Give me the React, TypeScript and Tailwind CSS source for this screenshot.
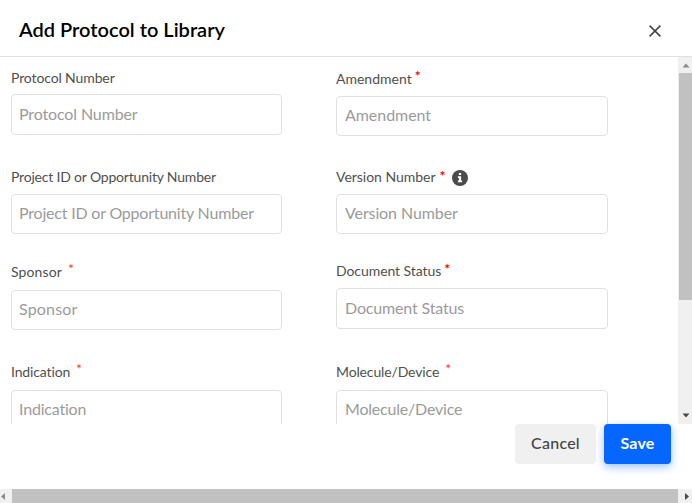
import React from "react";

type FieldProps = {
  name: string;
  className: string;
  labelClass: string;
  inputClass: string;
  star?: string;
  info?: boolean;
};

function InfoIcon() {
  return (
    <svg className="ml-[6px] mt-[3px] size-4 shrink-0" viewBox="0 0 16 16" aria-hidden="true">
      <circle cx="8" cy="8" r="8" fill="#4b4b4b" />
      <path d="M6.9 3h2.2v2.1H6.9zM5.9 6.3h3.2v4.2h1v1.7H5.9v-1.7h1V8h-1z" fill="#fff" />
    </svg>
  );
}

function Field({ name, className, labelClass, inputClass, star, info }: FieldProps) {
  return (
    <div className={`shrink-0 ${className}`}>
      <div className="flex h-5 items-start whitespace-nowrap text-[14px] leading-5 text-[#505050]">
        <span className={labelClass}>{name}</span>
        {star && <span className={`h-5 w-[6px] text-[14px] leading-5 ${star}`}>*</span>}
        {info && <InfoIcon />}
      </div>
      <input
        type="text"
        placeholder={name}
        aria-label={name}
        className={`block w-full rounded-[4px] border border-[#e0e0e0] bg-white pr-2 text-[16px] text-[#505050] outline-none placeholder:text-[#9b9b9b] ${inputClass}`}
      />
    </div>
  );
}

export default function App() {
  return (
    <div className="flex h-[503px] w-[692px] flex-col overflow-hidden bg-white font-[Lato,sans-serif]">
      <header className="flex h-[57px] shrink-0 items-center justify-between border-b border-[#dfdfdf] pl-[19px] pr-[31px] pt-1">
        <h1 className="mb-[2px] whitespace-nowrap text-[20px] font-semibold leading-6 text-black">Add Protocol to Library</h1>
        <button aria-label="Close" className="mt-px">
          <svg className="size-3" viewBox="0 0 12 12" fill="none" stroke="#444" strokeWidth="1.5">
            <path d="M.6.6l10.8 10.8M11.4.6L.6 11.4" />
          </svg>
        </button>
      </header>

      <main className="flex h-[367px] shrink-0">
        <div className="flex flex-1 items-start gap-[54px] overflow-hidden pl-[11px]">
          <div className="flex h-[367px] w-[271px] flex-col overflow-hidden">
            <Field name="Protocol Number" className="mt-[11px]" labelClass="tracking-[-0.12px]" inputClass="mt-[6px] h-[41px] pb-[2px] pl-[7px] tracking-[-0.13px]" />
            <Field name="Project ID or Opportunity Number" className="mt-[32px]" labelClass="tracking-[-0.19px]" inputClass="mt-[7px] h-10 pb-[3px] pl-[7px] tracking-[-0.2px]" />
            <Field name="Sponsor" className="mt-[28px]" labelClass="tracking-[0.12px]" inputClass="mt-[8px] h-10 pb-[3px] pl-[7px] tracking-[0.18px]" star="ml-[6px] -mt-[3px] text-[#f33]" />
            <Field name="Indication" className="mt-[32px]" labelClass="tracking-[-0.14px]" inputClass="mt-[8px] h-10 pb-[3px] pl-[7px] tracking-[-0.2px]" star="ml-[6px] -mt-[3px] text-[#f33]" />
          </div>
          <div className="flex h-[367px] w-[272px] flex-col overflow-hidden">
            <Field name="Amendment" className="mt-[12px]" labelClass="" inputClass="mt-[7px] h-10 pb-[3px] pl-[8px] tracking-[-0.05px]" star="ml-[3px] -mt-[3px] font-bold text-[#f00]" />
            <Field name="Version Number" className="mt-[31px]" labelClass="tracking-[-0.02px]" inputClass="mt-[7px] h-10 pb-[3px] pl-[8px] tracking-[-0.1px]" star="ml-[4px] -mt-px font-bold text-[#f00]" info />
            <Field name="Document Status" className="mt-[27px]" labelClass="tracking-[-0.07px]" inputClass="mt-[7px] h-[41px] pb-[2px] pl-[8px] tracking-[-0.16px]" star="ml-[3px] -mt-[2px] font-bold text-[#f00]" />
            <Field name="Molecule/Device" className="mt-[33px]" labelClass="tracking-[-0.14px]" inputClass="mt-[8px] h-10 pb-[3px] pl-[8px] tracking-[-0.2px]" star="ml-[6px] -mt-[3px] text-[#f33]" />
          </div>
        </div>
        <div className="flex w-[14px] flex-col items-end bg-[#f0f0f0]">
          <svg className="h-4 w-[14px]" viewBox="0 0 14 16">
            <path d="M8 6.5L11.5 10.5h-7z" fill="#8a8a8a" />
          </svg>
          <div className="h-[227px] w-[13px] bg-[#c1c1c1]" />
          <svg className="mt-auto h-4 w-[14px]" viewBox="0 0 14 16">
            <path d="M4.5 5.5h7L8 9.5z" fill="#4a4a4a" />
          </svg>
        </div>
      </main>

      <footer className="flex h-[65px] shrink-0 items-start justify-end gap-2 pr-[21px]">
        <button className="h-10 w-[81px] rounded-[4px] bg-[#f0f0f0] pb-[2px] text-[16px] font-medium tracking-[0.25px] text-[#444]">Cancel</button>
        <button className="h-10 w-[67px] rounded-[4px] bg-[#0567ff] pb-[2px] text-[16px] font-bold tracking-[0.2px] text-white shadow-[0_3px_8px_rgba(5,103,255,0.4)]">Save</button>
      </footer>

      <div className="flex h-[14px] bg-[#f0f0f0]">
        <svg className="h-[14px] w-3 shrink-0" viewBox="0 0 12 14">
          <path d="M1 7.5l4-3.5v7z" fill="#8a8a8a" />
        </svg>
        <div className="h-[14px] w-[666px] bg-[#c1c1c1]" />
        <svg className="h-[14px] w-[14px] shrink-0" viewBox="0 0 14 14">
          <path d="M7 4v7l4-3.5z" fill="#4a4a4a" />
        </svg>
      </div>
    </div>
  );
}
